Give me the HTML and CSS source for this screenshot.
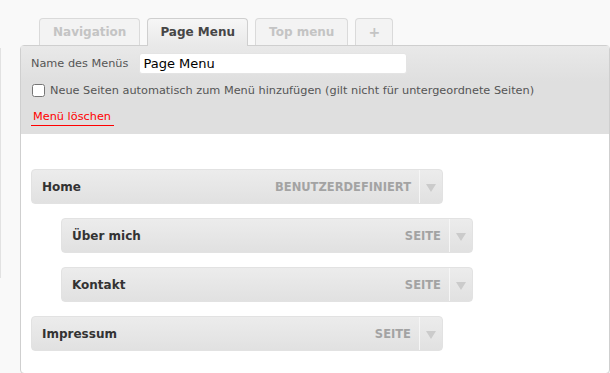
FILE: index.html
```html
<!DOCTYPE html>
<html lang="de">
<head>
  <meta charset="UTF-8" />
  <title>Menüs</title>
  <link rel="stylesheet" href="styles.css">
</head>
<body>
  <div class="page">
    <div class="side-edge"></div>
    <div class="main">
      <div class="tabs">
        <div class="tab">Navigation</div>
        <div class="tab active">Page Menu</div>
        <div class="tab">Top menu</div>
        <div class="tab plus">+</div>
      </div>

      <div class="panel">
        <div class="panel-head">
          <div class="name-row">
            <label for="menuName">Name des Menüs</label>
            <input type="text" id="menuName" value="Page Menu" />
          </div>
          <div class="check-row">
            <input type="checkbox" id="autoAdd" />
            <label for="autoAdd">Neue Seiten automatisch zum Menü hinzufügen (gilt nicht für untergeordnete Seiten)</label>
          </div>
          <a class="delete" href="#">Menü löschen</a>
        </div>

        <ul class="menu-items">
          <li class="item">
            <span class="item-title">Home</span>
            <span class="item-type">Benutzerdefiniert</span>
            <span class="item-toggle"><span class="arrow"></span></span>
          </li>
          <li class="item sub">
            <span class="item-title">Über mich</span>
            <span class="item-type">Seite</span>
            <span class="item-toggle"><span class="arrow"></span></span>
          </li>
          <li class="item sub">
            <span class="item-title">Kontakt</span>
            <span class="item-type">Seite</span>
            <span class="item-toggle"><span class="arrow"></span></span>
          </li>
          <li class="item">
            <span class="item-title">Impressum</span>
            <span class="item-type">Seite</span>
            <span class="item-toggle"><span class="arrow"></span></span>
          </li>
        </ul>
      </div>
    </div>
  </div>
</body>
</html>
```

FILE: styles.css
```css
body {
  margin: 0;
  background: #f9f9f9;
  font-family: 'DejaVu Sans', Verdana, sans-serif;
  color: #555;
  overflow: hidden;
}

.page {
  display: flex;
  align-items: flex-start;
}

.side-edge {
  width: 1px;
  height: 230px;
  margin-top: 48px;
  background: #e2e2e2;
}

.main {
  margin-left: 19px;
  width: 600px;
}

.tabs {
  display: flex;
  gap: 7px;
  padding-left: 19px;
  margin-top: 18px;
  height: 27px;
}

.tab {
  height: 27px;
  box-sizing: border-box;
  padding: 0 13px;
  border: 1px solid #dadada;
  border-bottom: none;
  border-radius: 4px 4px 0 0;
  background: #f3f3f3;
  color: #c4c4c4;
  font-size: 12px;
  font-weight: bold;
  line-height: 27px;
}

.tab.active {
  position: relative;
  z-index: 1;
  height: 28px;
  border-color: #cfcfcf;
  background: linear-gradient(#f6f6f6, #e9e9e9);
  color: #464646;
  padding: 0 12px;
}

.tab.plus {
  padding: 0 12px;
  font-size: 14px;
}

.panel {
  border: 1px solid #cfcfcf;
  border-radius: 4px;
  background: #fff;
  height: 327px;
}

.panel-head {
  background: linear-gradient(#e9e9e9, #dfdfdf 40%);
  padding: 7px 10px 0 10px;
  height: 81px;
  font-size: 11.3px;
}

.name-row {
  display: flex;
  align-items: center;
  gap: 11px;
}

.name-row input {
  width: 268px;
  height: 21px;
  box-sizing: border-box;
  border: 1px solid #e4e4e4;
  border-radius: 3px;
  padding: 0 3px;
  font-family: 'DejaVu Sans', Verdana, sans-serif;
  font-size: 13px;
  color: #000;
}

.check-row {
  display: flex;
  align-items: center;
  gap: 5px;
  margin-top: 10px;
  padding-left: 1px;
}

.check-row input {
  margin: 0;
  width: 13px;
  height: 13px;
}

.delete {
  display: inline-block;
  margin-top: 13px;
  padding: 0 3px 2px 2px;
  color: #f00;
  text-decoration: none;
  border-bottom: 1px solid #f00;
  font-size: 11.3px;
}

.menu-items {
  list-style: none;
  margin: 0;
  padding: 35px 0 0 10px;
  display: flex;
  flex-direction: column;
  gap: 14px;
}

.item {
  display: flex;
  align-items: center;
  width: 412px;
  height: 35px;
  box-sizing: border-box;
  border: 1px solid #e2e2e2;
  border-radius: 4px;
  background: linear-gradient(#ececec, #e1e1e1);
}

.item.sub {
  margin-left: 30px;
}

.item-title {
  flex: 1;
  padding-left: 10px;
  font-size: 12px;
  font-weight: bold;
  color: #333;
}

.item-type {
  padding-right: 8px;
  font-size: 11.5px;
  font-weight: bold;
  color: #a3a3a3;
  text-transform: uppercase;
}

.item-toggle {
  align-self: stretch;
  width: 22px;
  border-left: 1px solid #f6f6f6;
  display: flex;
  align-items: center;
  justify-content: center;
}

.arrow {
  width: 0;
  height: 0;
  margin-top: 2px;
  border-left: 5px solid transparent;
  border-right: 5px solid transparent;
  border-top: 8px solid #cbcbcb;
}
```
